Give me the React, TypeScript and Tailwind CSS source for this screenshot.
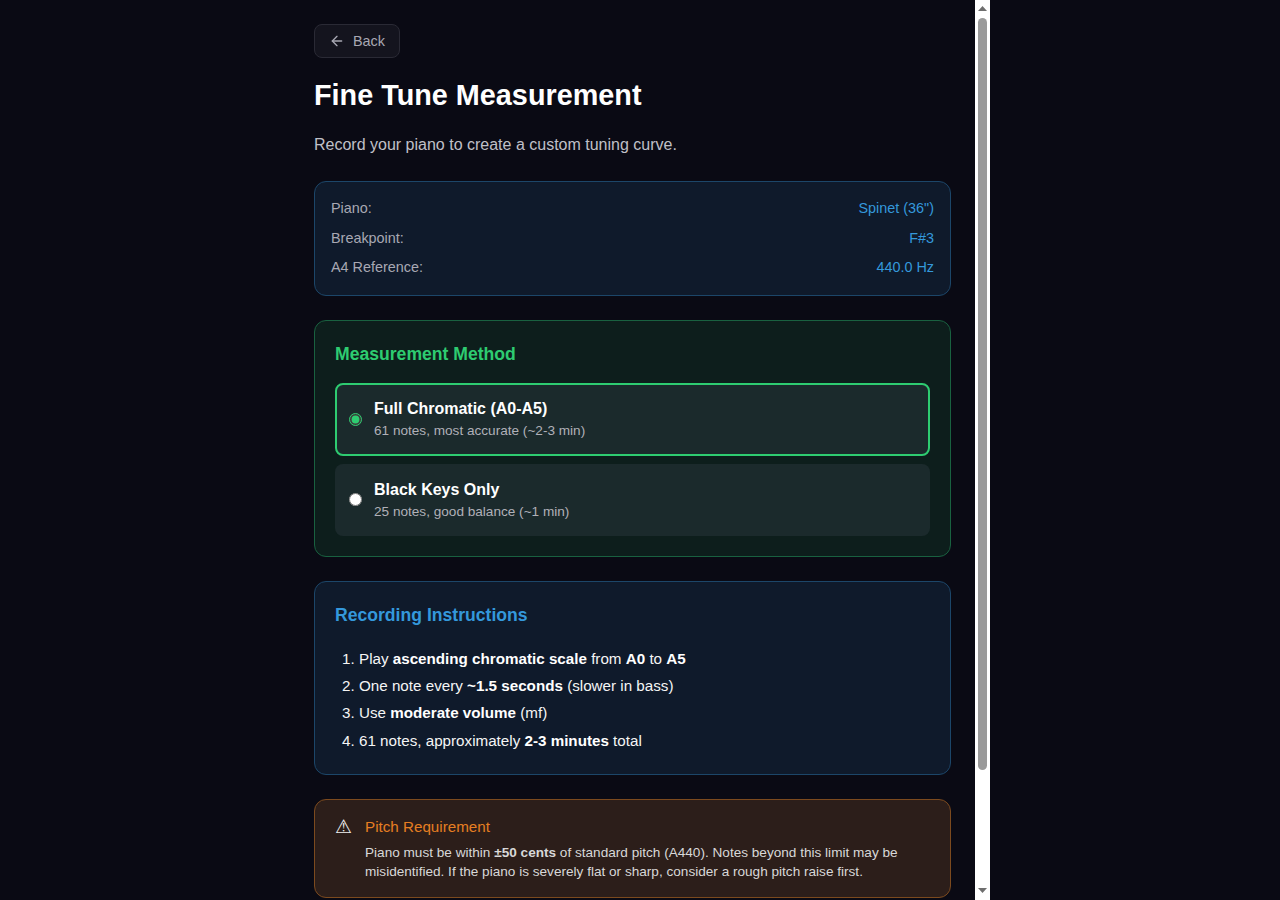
import { ArrowLeft } from 'lucide-react'

const infoRows = [
  { label: 'Piano:', value: 'Spinet (36")' },
  { label: 'Breakpoint:', value: 'F#3' },
  { label: 'A4 Reference:', value: '440.0 Hz' },
]

const methods = [
  { name: 'Full Chromatic (A0-A5)', detail: '61 notes, most accurate (~2-3 min)', selected: true },
  { name: 'Black Keys Only', detail: '25 notes, good balance (~1 min)', selected: false },
]

// the page's scrollbar, drawn because the browser window hides native ones
function ScrollBar() {
  return (
    <div className="flex h-screen w-[15px] shrink-0 flex-col items-center bg-white">
      <svg width="9" height="17" viewBox="0 0 9 17" className="shrink-0">
        <path d="M4.5 6L9 11H0z" fill="#6e6e6e" />
      </svg>
      <div className="mt-px h-[752px] w-[9px] rounded-full bg-[#9a9a9a]" />
      <svg width="9" height="17" viewBox="0 0 9 17" className="mt-auto shrink-0">
        <path d="M0 5H9L4.5 10z" fill="#6e6e6e" />
      </svg>
    </div>
  )
}

export default function App() {
  return (
    <div className="h-screen overflow-hidden bg-[#0a0a14] font-['Liberation_Sans',Arial,sans-serif] text-white">
      <div className="mx-auto flex h-screen max-w-[700px]">
        <div className="h-screen min-w-0 flex-1 overflow-y-auto p-6 pb-[138px]">
          <button className="flex h-[34px] items-center gap-2 rounded-lg border border-[#2a2a35] bg-[#14141e] px-[14px] pt-[2px] text-[14.4px] text-[#a8a8b3]">
            <ArrowLeft size={16} className="-mt-[2px]" />
            Back
          </button>

          <h1 className="mt-[19px] text-[28.8px] leading-[36px] font-bold">Fine Tune Measurement</h1>
          <p className="mt-[20px] text-base leading-[24px] text-[#c0c0c8]">Record your piano to create a custom tuning curve.</p>

          {/* Piano info */}
          <div className="mt-[24px] rounded-xl border border-[#1c4669] bg-[#0f1a2b] px-4 py-3">
            {infoRows.map(row => (
              <div key={row.label} className="flex h-[29.67px] items-center justify-between text-[14.4px]">
                <span className="text-[#a8a8b3]">{row.label}</span>
                <span className="text-[#3498db]">{row.value}</span>
              </div>
            ))}
          </div>

          {/* Measurement method */}
          <div className="mt-6 rounded-xl border border-[#196140] bg-[#0d1e1c] p-5">
            <h3 className="text-[17.6px] leading-[26px] font-bold text-[#2ecc71]">Measurement Method</h3>
            <div className="mt-4 flex flex-col gap-2">
              {methods.map(m => (
                <label
                  key={m.name}
                  className={`flex items-center gap-3 rounded-lg border-2 px-3 ${m.selected ? 'h-[73px] border-[#2ecc71]' : 'h-[72px] border-transparent'} bg-[#1b2a2c]`}
                >
                  <input type="radio" name="method" defaultChecked={m.selected} className="accent-[#2ecc71]" />
                  <div className={m.selected ? '' : 'mt-[2px]'}>
                    <div className="text-base leading-[20px] font-bold">{m.name}</div>
                    <div className="mt-[3px] text-[13.6px] leading-[18px] text-[#b0b0b8]">{m.detail}</div>
                  </div>
                </label>
              ))}
            </div>
          </div>

          {/* Instructions */}
          <div className="mt-6 rounded-xl border border-[#1c4669] bg-[#0f1a2b] px-5 pt-5 pb-[20.3px]">
            <h3 className="text-[17.6px] leading-[26px] font-bold text-[#3498db]">Recording Instructions</h3>
            <ol className="mt-[16.7px] list-decimal pl-6 text-[15.2px] leading-[27.3px] text-[#f5f5f5] [&_strong]:text-white">
              <li>Play <strong>ascending chromatic scale</strong> from <strong>A0</strong> to <strong>A5</strong></li>
              <li>One note every <strong>~1.5 seconds</strong> (slower in bass)</li>
              <li>Use <strong>moderate volume</strong> (mf)</li>
              <li>61 notes, approximately <strong>2-3 minutes</strong> total</li>
            </ol>
          </div>

          {/* Warning */}
          <div className="mt-6 flex gap-3 rounded-xl border border-[#7c4a1e] bg-[#2c1e1a] px-5 pt-[15px] pb-[16px]">
            <span className="w-[18px] shrink-0 text-[19.2px] leading-[24px] text-[#f0f0f0]">⚠</span>
            <div>
              <div className="text-[15.2px] leading-[24px] text-[#e67e22]">Pitch Requirement</div>
              <p className="mt-[4px] text-[13.6px] leading-[19px] text-[#d8d8d8]">
                Piano must be within <strong>±50 cents</strong> of standard pitch (A440). Notes beyond this limit may be misidentified. If the piano is severely flat or sharp, consider a rough pitch raise first.
              </p>
            </div>
          </div>
        </div>
        <ScrollBar />
      </div>
    </div>
  )
}
